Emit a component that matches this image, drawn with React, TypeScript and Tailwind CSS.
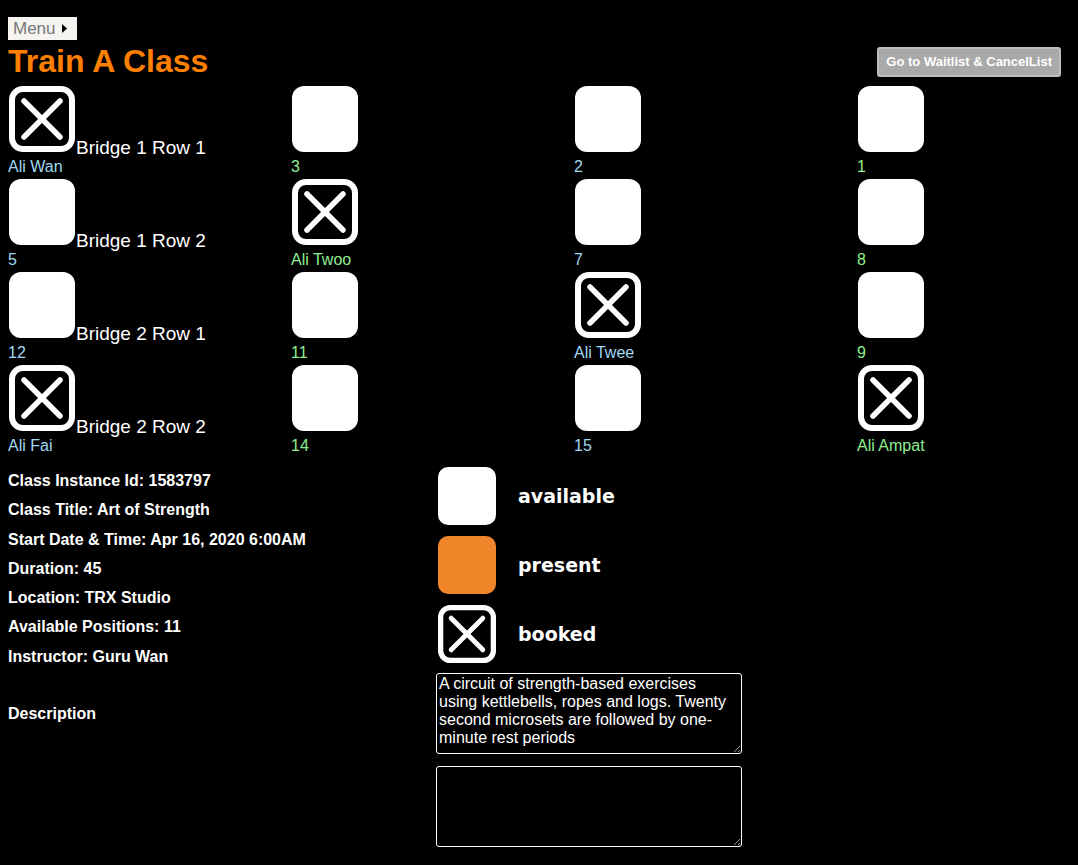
import { useState } from 'react';

type Seat = { booked: boolean; label: string; row?: string };

const rows: Seat[][] = [
  [
    { booked: true, label: 'Ali Wan', row: 'Bridge 1 Row 1' },
    { booked: false, label: '3' },
    { booked: false, label: '2' },
    { booked: false, label: '1' },
  ],
  [
    { booked: false, label: '5', row: 'Bridge 1 Row 2' },
    { booked: true, label: 'Ali Twoo' },
    { booked: false, label: '7' },
    { booked: false, label: '8' },
  ],
  [
    { booked: false, label: '12', row: 'Bridge 2 Row 1' },
    { booked: false, label: '11' },
    { booked: true, label: 'Ali Twee' },
    { booked: false, label: '9' },
  ],
  [
    { booked: true, label: 'Ali Fai', row: 'Bridge 2 Row 2' },
    { booked: false, label: '14' },
    { booked: false, label: '15' },
    { booked: true, label: 'Ali Ampat' },
  ],
];

const info = [
  'Class Instance Id: 1583797',
  'Class Title: Art of Strength',
  'Start Date & Time: Apr 16, 2020 6:00AM',
  'Duration: 45',
  'Location: TRX Studio',
  'Available Positions: 11',
  'Instructor: Guru Wan',
];

const description =
  'A circuit of strength-based exercises using kettlebells, ropes and logs. Twenty second microsets are followed by one-minute rest periods';

const BookedIcon = ({ size }: { size: number }) => (
  <svg width={size} height={size} viewBox="0 0 66 66" className="block shrink-0">
    <rect x="3" y="3" width="60" height="60" rx="11" fill="none" stroke="white" strokeWidth="6" />
    <line x1="15" y1="15" x2="51" y2="51" stroke="white" strokeWidth="5.5" strokeLinecap="round" />
    <line x1="51" y1="15" x2="15" y2="51" stroke="white" strokeWidth="5.5" strokeLinecap="round" />
  </svg>
);

const SeatBox = ({ booked }: { booked: boolean }) =>
  booked ? (
    <BookedIcon size={66} />
  ) : (
    <div className="w-[66px] h-[66px] shrink-0 rounded-[12px] bg-white" />
  );

const App = () => {
  const [notes, setNotes] = useState('');

  return (
    <div className="min-h-screen bg-black text-white px-2 pt-[17px] font-['Liberation_Sans',Arial,sans-serif]">
      {/* Menu toggle */}
      <button className="flex items-center h-[23px] pl-[5px] pr-[10px] gap-[6px] bg-[#f5f4f0] text-[#777] text-[17px] leading-none">
        Menu
        <svg width="5" height="9" viewBox="0 0 5 9">
          <path d="M0 0 L5 4.5 L0 9 Z" fill="black" />
        </svg>
      </button>

      {/* Header */}
      <div className="flex justify-between items-start h-[46px]">
        <h1 className="mt-[3px] text-[32px] leading-[36px] font-bold text-[#ff8000]">Train A Class</h1>
        <button className="mt-[7px] mr-[9px] h-[30px] px-[7px] rounded-[3px] border-2 border-[#bdbdbd] bg-[#a9a9a9] text-white text-[13px] font-bold">
          Go to Waitlist &amp; CancelList
        </button>
      </div>

      {/* Seat map */}
      <div className="grid grid-cols-[283px_283px_283px_1fr]">
        {rows.flat().map((seat, i) => (
          <div key={i} className="h-[93px]">
            <div className="flex items-baseline h-[66px] pl-px">
              <SeatBox booked={seat.booked} />
              {seat.row && (
                <span className="relative top-[2px] ml-px text-[19px] leading-none whitespace-nowrap">{seat.row}</span>
              )}
            </div>
            <div
              className={`mt-[6px] text-[16px] leading-[18px] ${
                i % 2 === 0 ? 'text-[#a0d8f2]' : 'text-[#90ee90]'
              }`}
            >
              {seat.label}
            </div>
          </div>
        ))}
      </div>

      {/* Class details */}
      <div className="grid grid-cols-[428px_auto] mt-[8px]">
        <div className="font-bold text-[16px] leading-[29.3px]">
          {info.map((line) => (
            <div key={line}>{line}</div>
          ))}
        </div>
        <div className="mt-[1px] ml-[2px] flex flex-col gap-[11px] font-['DejaVu_Sans',sans-serif] font-bold text-[19px]">
          <div className="flex items-center gap-[22px]">
            <div className="w-[58px] h-[58px] rounded-[10px] bg-white" />
            <span>available</span>
          </div>
          <div className="flex items-center gap-[22px]">
            <div className="w-[58px] h-[58px] rounded-[10px] bg-[#f0852a]" />
            <span>present</span>
          </div>
          <div className="flex items-center gap-[22px]">
            <BookedIcon size={58} />
            <span>booked</span>
          </div>
        </div>

        <div className="mt-[2px] flex items-center font-bold text-[16px]">Description</div>
        <textarea
          readOnly
          defaultValue={description}
          className="mt-[2px] block w-[306px] h-[81px] border border-white rounded-[3px] bg-black text-white text-[16px] leading-[18px] pl-[2px] pr-[14px] py-[1px] outline-none"
        />

        <div />
        <textarea
          value={notes}
          onChange={(e) => setNotes(e.target.value)}
          className="mt-[12px] block w-[306px] h-[81px] border border-white rounded-[3px] bg-black text-white text-[16px] leading-[18px] pl-[2px] pr-[14px] py-[1px] outline-none"
        />
      </div>
    </div>
  );
};

export default App;
